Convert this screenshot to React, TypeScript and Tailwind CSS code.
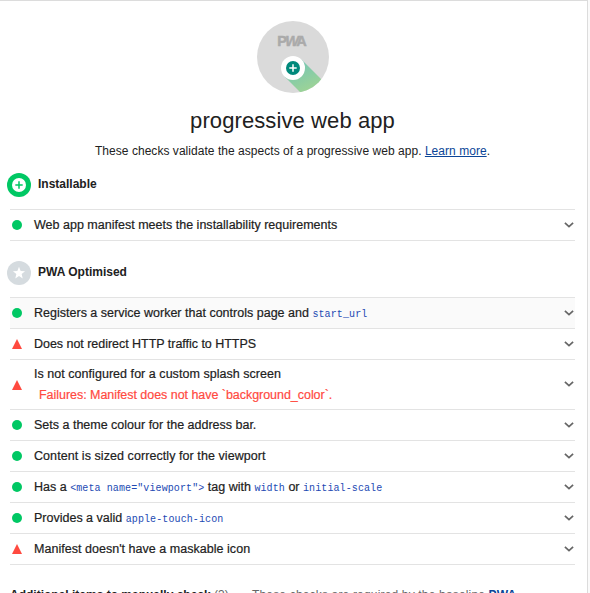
import type { ReactNode } from 'react';

function PwaGauge() {
  return (
    <svg className="mr-[1px] block h-[72px] w-[72px]" viewBox="0 0 72 72">
      <defs>
        <linearGradient id="beam" x1="42" y1="40" x2="56" y2="70" gradientUnits="userSpaceOnUse">
          <stop offset="0" stopColor="#75c6b4" />
          <stop offset="1" stopColor="#a0d494" />
        </linearGradient>
        <clipPath id="disc">
          <circle cx="36" cy="36" r="36" />
        </clipPath>
      </defs>
      <circle cx="36" cy="36" r="36" fill="#dadada" />
      <path d="M44.5 38.5 L76 70 L58 86 L27.5 55.5Z" fill="url(#beam)" clipPath="url(#disc)" />
      <circle cx="36" cy="47" r="12" fill="#fff" />
      <circle cx="36" cy="47" r="7" fill="#00897b" />
      <path d="M36 43.3v7.4M32.3 47h7.4" stroke="#fff" strokeWidth="1.5" />
      <g className="font-['Liberation_Sans',sans-serif] text-[14.5px] font-bold" fill="#aaa" stroke="#aaa" strokeWidth=".5">
        <text x="20.3" y="25">P</text>
        <text x="28.3" y="25" fontStyle="italic">W</text>
        <text x="39.3" y="25">A</text>
      </g>
    </svg>
  );
}

function InstallBadge() {
  return (
    <svg className="h-6 w-6 shrink-0" viewBox="0 0 24 24">
      <circle cx="12" cy="12" r="12" fill="#00c864" />
      <circle cx="12" cy="12" r="7" fill="#fff" />
      <path d="M12 8.3v7.4M8.3 12h7.4" stroke="#00c864" strokeWidth="1.5" />
    </svg>
  );
}

function StarBadge() {
  return (
    <svg className="h-6 w-6 shrink-0" viewBox="0 0 24 24">
      <circle cx="12" cy="12" r="12" fill="#d5dbdf" />
      <path d="M12 5.8l1.65 4.1 4.4.35-3.4 2.85 1.07 4.3L12 15.05 8.28 17.4l1.07-4.3-3.4-2.85 4.4-.35z" fill="#fff" />
    </svg>
  );
}

function Chevron() {
  return (
    <svg className="mr-px h-[7px] w-[10px] shrink-0" viewBox="0 0 10 7" fill="none">
      <path d="M.9 .9L5 4.7l4.1-3.8" stroke="#666" strokeWidth="1.7" />
    </svg>
  );
}

function Code({ children }: { children: ReactNode }) {
  return <code className="font-['Liberation_Mono',monospace] text-[10px] leading-[0] tracking-[0.1px] text-[#2249b3] [-webkit-text-stroke:0]">{children}</code>;
}

function Audit({ pass = false, highlighted = false, detail, track = '', children }: {
  pass?: boolean;
  highlighted?: boolean;
  detail?: string;
  track?: string;
  children: ReactNode;
}) {
  return (
    <li className={`flex items-center border-b border-[#e3e3e3] ${detail ? 'h-[50px]' : 'h-[31px]'} ${highlighted ? 'bg-[#fafafa]' : ''}`}>
      <svg className="ml-[2px] mr-3 h-[10px] w-[10px] shrink-0" viewBox="0 0 10 10">
        {pass ? <circle cx="5" cy="5" r="5" fill="#00c864" /> : <path d="M5 0l5 10H0z" fill="#ff4a3f" />}
      </svg>
      <div className="min-w-0 flex-1 whitespace-nowrap text-[12.5px] [-webkit-text-stroke:0.2px]">
        <div className={`leading-5 ${track}`}>{children}</div>
        {detail && <div className="mt-px pl-[5px] leading-5 tracking-[-0.04px] text-[#ff4a3f]">{detail}</div>}
      </div>
      <Chevron />
    </li>
  );
}

export default function App() {
  return (
    <div className="flex h-[593px] w-[590px] overflow-hidden bg-[#fafafa] font-['Liberation_Sans',Arial,sans-serif] text-[12px] text-[#212121]">
      <main className="h-full w-[588px] overflow-hidden border-t border-r border-[#dcdcdc] bg-white pt-5">
        <header className="flex flex-col items-center">
          <PwaGauge />
          <h1 className="mt-3 pr-[2px] text-[22px] leading-8 tracking-[0.1px]">progressive web app</h1>
          <p className="mt-1 pr-[2px] leading-5 tracking-[0.04px]">
            These checks validate the aspects of a progressive web app.{' '}
            <a className="text-[#0b4597] underline underline-offset-1">Learn more</a>.
          </p>
        </header>

        <h2 className="mt-3 flex h-6 items-center gap-[7px] pl-[7px] font-bold"><InstallBadge /><span className="-mt-[2px]">Installable</span></h2>
        <ul className="ml-[10px] mt-3 w-[565px] border-t border-[#e3e3e3]">
          <Audit pass track="tracking-[0.01px]">Web app manifest meets the installability requirements</Audit>
        </ul>

        <h2 className="mt-5 flex h-6 items-center gap-[7px] pl-[7px] font-bold"><StarBadge /><span className="-mt-[2px]">PWA Optimised</span></h2>
        <ul className="ml-[10px] mt-3 w-[565px] border-t border-[#e3e3e3]">
          <Audit pass highlighted track="tracking-[0.01px]">Registers a service worker that controls page and <Code>start_url</Code></Audit>
          <Audit track="tracking-[-0.03px]">Does not redirect HTTP traffic to HTTPS</Audit>
          <Audit track="tracking-[0.04px]" detail="Failures: Manifest does not have `background_color`.">Is not configured for a custom splash screen</Audit>
          <Audit pass>Sets a theme colour for the address bar.</Audit>
          <Audit pass track="tracking-[0.07px]">Content is sized correctly for the viewport</Audit>
          <Audit pass>Has a <Code>{'<meta name="viewport">'}</Code> tag with <Code>width</Code> or <Code>initial-scale</Code></Audit>
          <Audit pass>Provides a valid <Code>apple-touch-icon</Code></Audit>
          <Audit track="tracking-[0.03px]">Manifest doesn't have a maskable icon</Audit>
        </ul>

        <div className="mt-[20px] flex whitespace-nowrap pl-[10px] leading-5 text-[#666]">
          <p className="w-[242px]"><strong className="text-[#212121]">Additional items to manually check</strong> (3)</p>
          <p className="tracking-[0.17px]">These checks are required by the baseline <strong className="text-[#0b4597]">PWA</strong></p>
        </div>
      </main>
    </div>
  );
}
